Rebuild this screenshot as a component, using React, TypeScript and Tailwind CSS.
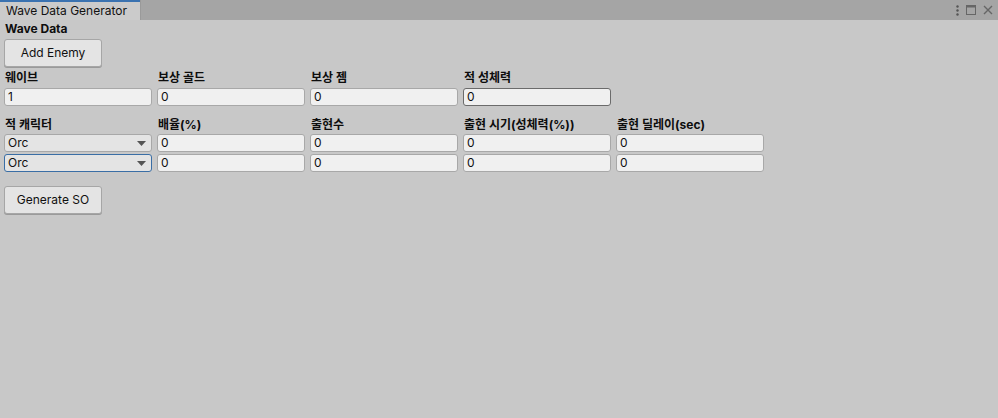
import React from 'react';

const font = { fontFamily: 'Inter, "Noto Sans CJK KR", sans-serif' };

function Field({ value, hover = false }: { value: string; hover?: boolean }) {
    return (
        <div
            className={`h-[18px] rounded-[3px] border bg-[#f0f0f0] px-[3px] text-[12px] leading-[16px] text-[#101010] ${
                hover ? 'border-[#6b6b6b]' : 'border-[#a8a8a8]'
            }`}
        >
            {value}
        </div>
    );
}

function Dropdown({ value, focused = false }: { value: string; focused?: boolean }) {
    return (
        <div
            className={`flex h-[18px] items-center justify-between rounded-[3px] border bg-[#e4e4e4] pl-[3px] pr-[5px] text-[12px] leading-[16px] text-[#101010] ${
                focused ? 'border-[#3a6ea5]' : 'border-[#a8a8a8]'
            }`}
        >
            <span>{value}</span>
            <svg width="9" height="5" viewBox="0 0 9 5">
                <path d="M0 0h9L4.5 5z" fill="#555" />
            </svg>
        </div>
    );
}

function Label({ text }: { text: string }) {
    return <div className="h-[15px] text-[12px] font-bold leading-[15px] text-[#0d0d0d]">{text}</div>;
}

function UnityButton({ text }: { text: string }) {
    return (
        <button className="h-[28px] w-[98px] rounded-[3px] border border-[#a6a6a6] bg-[#e4e4e4] text-[12px] text-[#101010] shadow-[0_1px_0_#9a9a9a]">
            {text}
        </button>
    );
}

export default function App() {
    const headerTop = ['웨이브', '보상 골드', '보상 젬', '적 성체력'];
    const valuesTop = ['1', '0', '0', '0'];
    const headerEnemy = ['적 캐릭터', '배율(%)', '출현수', '출현 시기(성체력(%))', '출현 딜레이(sec)'];
    const rows = [0, 1];

    return (
        <div className="flex h-[418px] w-[998px] flex-col bg-[#c8c8c8]" style={font}>
            {/* ── Tab bar ─────────────────────────────────────── */}
            <div className="flex h-[20px] items-stretch justify-between bg-[#a5a5a5]">
                <div className="flex w-[141px] flex-col border-r border-[#9a9a9a] bg-[#cbcbcb]">
                    <div className="h-[2px] bg-[#3a72b0]" />
                    <div className="pl-[6px] text-[12px] leading-[17px] text-[#111]">Wave Data Generator</div>
                </div>
                <div className="flex items-center gap-[7px] pr-[5px]">
                    <svg width="3" height="11" viewBox="0 0 3 11">
                        <circle cx="1.5" cy="1.5" r="1.2" fill="#555" />
                        <circle cx="1.5" cy="5.5" r="1.2" fill="#555" />
                        <circle cx="1.5" cy="9.5" r="1.2" fill="#555" />
                    </svg>
                    <svg width="10" height="10" viewBox="0 0 10 10">
                        <rect x="0.5" y="0.5" width="9" height="9" fill="none" stroke="#666" />
                        <rect x="0.5" y="0.5" width="9" height="2" fill="#666" />
                    </svg>
                    <svg width="10" height="10" viewBox="0 0 10 10">
                        <path d="M1 1L9 9M9 1L1 9" stroke="#666" strokeWidth="1.4" />
                    </svg>
                </div>
            </div>

            {/* ── Body ────────────────────────────────────────── */}
            <div className="flex flex-col px-[4px] pt-[1px]">
                <div className="pl-[1px] text-[12px] font-bold leading-[15px] text-[#0d0d0d]">Wave Data</div>

                <div className="mt-[3px]">
                    <UnityButton text="Add Enemy" />
                </div>

                <div className="mt-[3px] grid grid-cols-[148px_148px_148px_148px] gap-x-[5px] gap-y-[3px]">
                    {headerTop.map((h) => (
                        <div key={h} className="pl-[1px]">
                            <Label text={h} />
                        </div>
                    ))}
                    {valuesTop.map((v, i) => (
                        <Field key={i} value={v} hover={i === 3} />
                    ))}
                </div>

                <div className="mt-[11px] grid grid-cols-[148px_148px_148px_148px_148px] gap-x-[5px] gap-y-[2px]">
                    {headerEnemy.map((h) => (
                        <div key={h} className="pl-[1px]">
                            <Label text={h} />
                        </div>
                    ))}
                    {rows.map((r) => (
                        <React.Fragment key={r}>
                            <Dropdown value="Orc" focused={r === 1} />
                            <Field value="0" />
                            <Field value="0" />
                            <Field value="0" />
                            <Field value="0" />
                        </React.Fragment>
                    ))}
                </div>

                <div className="mt-[14px]">
                    <UnityButton text="Generate SO" />
                </div>
            </div>
        </div>
    );
}
